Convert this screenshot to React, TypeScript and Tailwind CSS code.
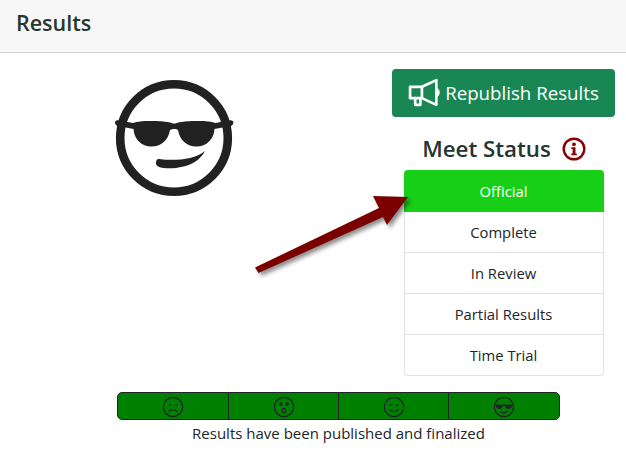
const font = { fontFamily: '"Open Sans", "Noto Sans", sans-serif' };

const FaceBase = ({ children }: { children: React.ReactNode }) => (
  <svg width="24" height="24" viewBox="0 0 24 24" fill="none" stroke="#212529" strokeWidth="1.3">
    <circle cx="12" cy="12" r="9.6" />
    {children}
  </svg>
);

const SadIcon = () => (
  <FaceBase>
    <circle cx="8.6" cy="10" r="1" fill="#212529" stroke="none" />
    <circle cx="15.4" cy="10" r="1" fill="#212529" stroke="none" />
    <path d="M7.8 16.6c2.4-2.2 6-2.2 8.4 0" strokeLinecap="round" />
  </FaceBase>
);

const SurpriseIcon = () => (
  <FaceBase>
    <circle cx="8.8" cy="9.2" r="1.2" />
    <circle cx="15.200" cy="9.200" r="1.200" />
    <ellipse cx="12" cy="15.600" rx="1.800" ry="2.200" />
  </FaceBase>
);

const SmileIcon = () => (
  <FaceBase>
    <circle cx="8.6" cy="10" r="1" fill="#212529" stroke="none" />
    <circle cx="15.4" cy="10" r="1" fill="#212529" stroke="none" />
    <path d="M7.6 14.6c2.4 2.6 6.4 2.6 8.8 0" strokeLinecap="round" />
  </FaceBase>
);

const CoolIcon = () => (
  <FaceBase>
    <path d="M2.4 9.6h19.2v1.2h-1.6c-.3 2.2-1.6 3.3-3.4 3.3-1.9 0-3.2-1.2-3.5-3.3h-2.2c-.3 2.1-1.6 3.3-3.5 3.3-1.8 0-3.1-1.1-3.4-3.3H2.4z" fill="#212529" stroke="none" />
    <path d="M8.4 16.8c2.2 1.2 5 1.2 7.2-.4" strokeLinecap="round" />
  </FaceBase>
);

const BigCool = () => (
  <svg width="120" height="120" viewBox="0 0 120 120" fill="#212121">
    <circle cx="60" cy="60" r="53.8" fill="none" stroke="#212121" strokeWidth="8.6" />
    <path d="M1 44.5c0-1.5 1.5-2.5 3-2.2L19 45c6-2.200 13-2.300 22-2 5 .2 12 .5 15 1.600 1.500.5 3 1 4.200 1 1.200 0 2.700-.5 4.200-1 3-1.100 10-1.400 15-1.600 9-.3 16-.2 22 2l15-2.700c1.500-.3 3 .7 3 2.200 0 2-1.500 3.300-3 3.500L100.500 51c-.5 10-8 17.600-18 17.600-9.500 0-17-6.600-18.500-16.600-1-1.500-6-1.500-8 0-1.500 10-9 16.600-18.500 16.600-10 0-17.500-7.600-18-17.600L4 48c-1.500-.2-3-1.500-3-3.500z" />
    <path d="M45 81C60 83 80 82 91 73 86 83 76 88 62 90 52 91 42 90 42 85.500 42 82 43 81 45 81z" />
  </svg>
);

const MegaphoneIcon = () => (
  <svg width="33" height="33" viewBox="0 0 32 32" fill="none" stroke="#fff" strokeWidth="2.6" strokeLinejoin="round" strokeLinecap="round">
    <path d="M2 9.500h11.500L27.500 3v24L13.500 20.500H2z" />
    <path d="M13.500 10v10" />
    <path d="M7 20.500v6.500h5v-5.500" />
    <path d="M28 12c2 .8 2 5 0 6" />
  </svg>
);

const InfoIcon = () => (
  <svg width="24" height="24" viewBox="0 0 24 24" fill="none">
    <circle cx="12" cy="12" r="10.300" stroke="#8b0000" strokeWidth="2.400" />
    <circle cx="12" cy="7.300" r="1.900" fill="#8b0000" />
    <path d="M9.300 10.300h4.200v6.200h1.300v1.800H9.300v-1.800h1.300v-4.400H9.300z" fill="#8b0000" />
  </svg>
);

const statuses = ["Complete", "In Review", "Partial Results", "Time Trial"];
const faces = [SadIcon, SurpriseIcon, SmileIcon, CoolIcon];

export default function App() {
  return (
    <div className="relative h-[454px] w-[626px] overflow-hidden bg-white text-[#212529]" style={font}>
      <div className="flex h-[53px] items-center border-b border-[#cfcfcf] bg-[#f7f7f7] pb-[5px] pl-4">
        <h1 className="text-[21.500px] font-semibold text-[#24382f]">Results</h1>
      </div>

      <div className="flex items-start pt-4">
        <div className="ml-[114px] mt-[9px] w-[278px]">
          <BigCool />
        </div>
        <div className="flex w-[223px] flex-col items-center">
          <button className="flex h-12 w-full items-center justify-center gap-[4px] rounded bg-[#198754] pt-[1px] text-[18.700px] text-white">
            <MegaphoneIcon />
            Republish Results
          </button>
          <div className="mt-[13px] mb-[2px] flex h-[38px] items-center gap-[11px] pl-[1px] text-[22.300px] font-semibold text-[#26352f]">
            Meet Status
            <InfoIcon />
          </div>
          <ul className="w-[200px] text-[14.800px]">
            <li className="flex h-[42px] items-center justify-center rounded-t bg-[#18cf18] text-white">Official</li>
            {statuses.map((s, i) => (
              <li
                key={s}
                className={
                  i === 3
                    ? "flex h-[41px] items-center justify-center rounded-b border border-t-0 border-[#dee2e6]"
                    : "flex h-[41px] items-center justify-center border border-t-0 border-[#dee2e6]"
                }
              >
                {s}
              </li>
            ))}
          </ul>
        </div>
      </div>

      <div className="ml-[117px] mt-4 flex h-[28px] w-[443px] rounded-[5px] border border-[#212529] bg-[#008000]">
        {faces.map((Face, i) => (
          <div
            key={i}
            className={
              i === 3
                ? "flex flex-1 items-center justify-center pt-[2px]"
                : i === 0
                  ? "flex w-[111px] items-center justify-center border-r border-[#212529] pt-[2px]"
                  : "flex w-[110px] items-center justify-center border-r border-[#212529] pt-[2px]"
            }
          >
            <Face />
          </div>
        ))}
      </div>
      <p className="ml-[117px] w-[443px] text-center text-[15px] leading-[26px]">Results have been published and finalized</p>

      <svg className="absolute left-[250px] top-[190px] drop-shadow-[3px_3px_2px_rgba(0,0,0,0.45)]" width="165" height="90" viewBox="250 190 165 90">
        <path d="M255 267.500 379 208 373 196 408 197 387 225 383 217 258.500 273z" fill="#7a0000" />
      </svg>
    </div>
  );
}
